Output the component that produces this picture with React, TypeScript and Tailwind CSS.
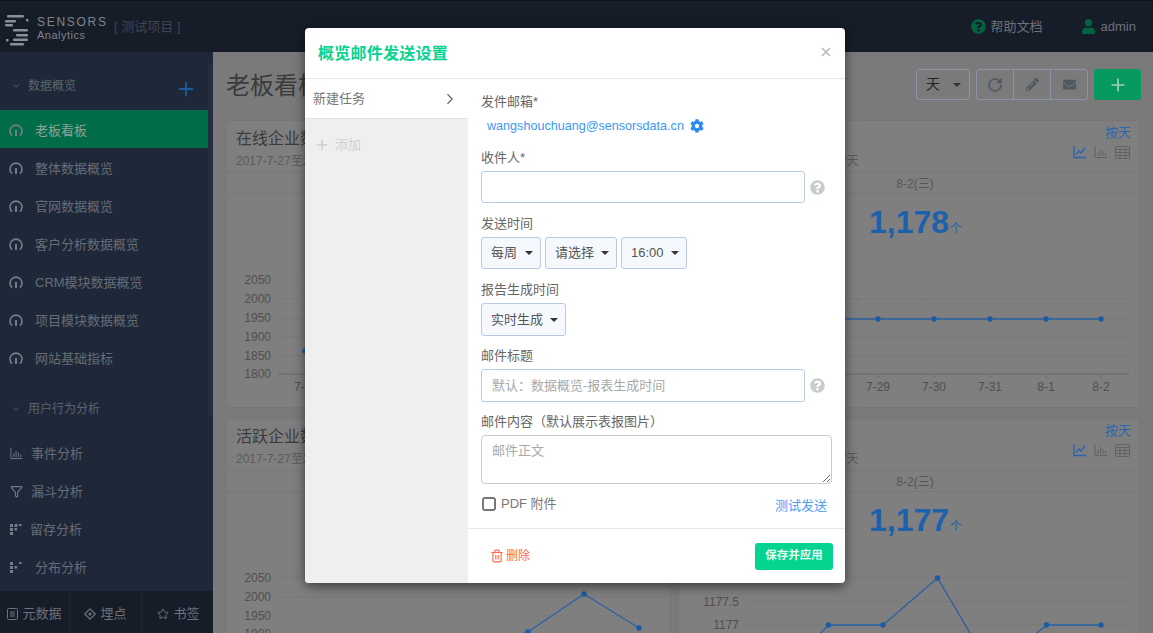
import React from "react";
import { FaCog, FaEnvelope, FaPencilAlt, FaQuestionCircle, FaUser } from "react-icons/fa";
import { ChevronDown, ChevronRight, Filter, Plus, RotateCw, Star, Trash2, X } from "lucide-react";

const Gauge = () => (
  <svg width="14" height="14" viewBox="0 0 14 14" fill="none" stroke="#757c87" strokeWidth="1.6" className="shrink-0 mt-[2px]">
    <path d="M3 12.6A6 6 0 1 1 11 12.6" />
    <path d="M7 7v6" strokeWidth="2" />
  </svg>
);

const Caret = () => (
  <svg width="8" height="4" viewBox="0 0 8 4" className="shrink-0" fill="#333">
    <path d="M0 0h8L4 4z" />
  </svg>
);

const Logo = () => (
  <svg width="30" height="44" viewBox="0 0 30 44" fill="#8b8f97" className="shrink-0">
    <rect x="7" y="11" width="17" height="2.4" rx="1" />
    <rect x="26" y="15" width="2.4" height="2.4" />
    <rect x="5" y="16" width="11" height="2.4" rx="1" />
    <rect x="5" y="20" width="8" height="2.4" rx="1" />
    <rect x="13" y="25" width="15" height="2.4" rx="1" />
    <rect x="16" y="30" width="12" height="2.4" rx="1" />
    <rect x="6" y="35" width="2.4" height="2.4" />
    <rect x="13" y="34.5" width="15" height="2.4" rx="1" />
    <rect x="10" y="39" width="14" height="2.4" rx="1" />
  </svg>
);

const BarIcon = ({ color = "#757c87", w = 14 }: { color?: string; w?: number }) => (
  <svg width={w} height={w} viewBox="0 0 14 14" fill="none" stroke={color} strokeWidth="1">
    <path d="M1 1v11.5h12.5" />
    <path d="M4 11V7M6.5 11V4M9 11V6M11.500 11V8" />
  </svg>
);

const LineIcon = () => (
  <svg width="14" height="14" viewBox="0 0 14 14" fill="none" stroke="#2b65ae" strokeWidth="1.400">
    <path d="M1 1v11.500h12.500" />
    <path d="M3 9.500 6 6l2 2 4-5" />
  </svg>
);

const TableIcon = () => (
  <svg width="15" height="13" viewBox="0 0 15 13" fill="none" stroke="#5f6266" strokeWidth="1">
    <rect x="0.500" y="0.500" width="14" height="12" rx="1" />
    <path d="M0.500 3.500h14M0.500 6.500h14M0.500 9.500h14M5 3.500v9M10 3.500v9" />
  </svg>
);

const GridDots = ({ sparse = false }: { sparse?: boolean }) => (
  <svg width="12" height="12" viewBox="0 0 12 12" fill="#757c87" className="shrink-0">
    <rect x="0" y="1" width="3" height="3" />
    <rect x="0" y="5" width="3" height="3" />
    <rect x="0" y="9" width="3" height="3" />
    <rect x="4.500" y="5" width="2.500" height="2.500" />
    <rect x="9" y="1" width="2.500" height="2" />
    {!sparse && <rect x="4.500" y="1" width="3" height="3" />}
  </svg>
);

type Pt = [number, number];

function Chart({
  gridX,
  gridEnd,
  ticks,
  axis,
  labels,
  points,
}: {
  gridX: number;
  gridEnd: number;
  ticks: { y: number; t: string }[];
  axis?: number;
  labels?: { x: number; t: string }[];
  points: Pt[];
}) {
  return (
    <svg width="100%" height="155" className="block" fontFamily="'Liberation Sans', sans-serif" fontSize="12">
      {ticks.map((k) => (
        <g key={k.t}>
          <line x1={gridX} x2={gridEnd} y1={k.y} y2={k.y} stroke="#727272" strokeDasharray="1 1" />
          <text x={gridX - 7} y={k.y + 4} textAnchor="end" fill="#4f4f4f">
            {k.t}
          </text>
        </g>
      ))}
      {axis !== undefined && <line x1={gridX} x2={gridEnd} y1={axis} y2={axis} stroke="#6a6a6a" />}
      {labels?.map((l) => (
        <g key={l.t}>
          <line x1={l.x} x2={l.x} y1={axis} y2={(axis ?? 0) + 4} stroke="#6a6a6a" />
          <text x={l.x} y={137} textAnchor="middle" fill="#4f4f4f">
            {l.t}
          </text>
        </g>
      ))}
      <polyline points={points.map((p) => p.join(",")).join(" ")} fill="none" stroke="#2a60a3" strokeWidth="1.300" />
      {points.map((p) => (
        <circle key={p[0]} cx={p[0]} cy={p[1]} r="2.700" fill="#1c5ba4" />
      ))}
    </svg>
  );
}

function Card({
  title,
  width,
  right,
  value,
  children,
}: {
  title: string;
  width: string;
  right?: boolean;
  value?: string;
  children: React.ReactNode;
}) {
  return (
    <div className={`${width} shrink-0 bg-[#7f7f7f] border border-[#777777] h-[288px]`}>
      <div className="h-[52px] border-b border-[#777777] flex justify-between pl-[9px] pr-[8px]">
        <div className="pt-[6px]">
          <div className="text-[16px] leading-6 text-[#3b3b3b]">{title}</div>
          <div className="text-[12px] leading-5 text-[#5b5b5b] whitespace-nowrap">2017-7-27至2017-8-2 | 过去 7天</div>
        </div>
        {right && (
          <div className="pt-[3px] flex flex-col items-end">
            <span className="text-[13px] leading-[18px] text-[#2b65ae]">按天</span>
            <div className="flex items-center gap-[7px] mt-[3px] pr-[1px]">
              <LineIcon />
              <BarIcon color="#5f6266" />
              <TableIcon />
            </div>
          </div>
        )}
      </div>
      <div className="h-[21px] border-b border-[#777777] pl-[12px] pt-[2px] flex items-center justify-center text-[12px] text-[#555555]">
        8-2(三)
      </div>
      <div className="h-[60px] pl-[13px] flex items-center justify-center">
        {value && (
          <div className="flex items-baseline pb-[4px] text-[#1e61ab]">
            <span className="text-[32px] leading-none font-bold">{value}</span>
            <span className="text-[12px] ml-[1px]">个</span>
          </div>
        )}
      </div>
      {children}
    </div>
  );
}

const inputCls =
  "h-full w-[324px] rounded-[3px] border border-[#b9c9e2] bg-white px-[10px] text-[13px] outline-none placeholder:text-[#a9a9a9]";

const Select = ({ label, w, h = "h-[32px]" }: { label: string; w: string; h?: string }) => (
  <div className={`${w} ${h} rounded-[3px] border border-[#b9c9e2] bg-[#f5f8fd] text-[13px] text-[#555555] flex items-center justify-between pl-[9px] pr-[7px]`}>
    <span>{label}</span>
    <Caret />
  </div>
);

const Label = ({ children, cls = "" }: { children: React.ReactNode; cls?: string }) => (
  <div className={`h-5 leading-[22px] text-[13px] text-[#666666] ${cls}`}>{children}</div>
);

const Help = () => <FaQuestionCircle size={15} color="#cbcbcb" className="ml-[5px]" />;

const topItems = ["老板看板", "整体数据概览", "官网数据概览", "客户分析数据概览", "CRM模块数据概览", "项目模块数据概览", "网站基础指标"];

export default function App() {
  const rightPts1: Pt[] = [765, 821, 877, 933, 989, 1045, 1100].map((x) => [x - 678, 65]);
  const rightPts2: Pt[] = [
    [95, 129],
    [149.500, 73],
    [204, 73],
    [258.500, 26],
    [313, 118],
    [367.500, 73],
    [422, 73],
  ];
  const ticks = [
    { y: 26, t: "2050" },
    { y: 45, t: "2000" },
    { y: 64, t: "1950" },
    { y: 83, t: "1900" },
    { y: 102, t: "1850" },
    { y: 120, t: "1800" },
  ];
  return (
    <div className="relative w-[1153px] h-[633px] overflow-hidden flex flex-col bg-[#7a7a7a] font-['Liberation_Sans','Noto_Sans_CJK_SC',sans-serif]">
      <header className="h-[52px] shrink-0 bg-[#171c29] border-t border-[#0f1322] flex items-center">
        <div className="-mt-[1px]">
          <Logo />
        </div>
        <div className="ml-[7px] w-[70px] pt-[3px] flex flex-col text-[#7f848c] whitespace-nowrap">
          <span className="text-[12px] leading-[14px] tracking-[1.700px]">SENSORS</span>
          <span className="text-[11px] leading-[13px] tracking-[0.500px]">Analytics</span>
        </div>
        <span className="ml-[7px] text-[13px] text-[#3e4450]">[ 测试项目 ]</span>
        <div className="ml-auto flex items-center text-[#6c717a] text-[13px] pr-[17px]">
          <FaQuestionCircle size={15} color="#03623f" />
          <span className="ml-[5px]">帮助文档</span>
          <FaUser size={15} color="#03623f" className="ml-[38px]" />
          <span className="ml-[5px]">admin</span>
        </div>
      </header>

      <div className="flex flex-1 min-h-0">
        <aside className="relative w-[213px] shrink-0 bg-[#1f2838] flex flex-col">
          <div className="absolute left-[208px] top-[11px] w-[5px] h-[353px] bg-[#232d3e]" />
          <div className="h-[58px] pt-[10px] pl-[11px] flex items-center text-[12px] text-[#5c6470]">
            <ChevronDown size={10} color="#5c6470" />
            <span className="ml-[7px]">数据概览</span>
            <Plus size={22} color="#1c5a9a" className="ml-[99px] mt-[5px]" />
          </div>
          {topItems.map((t, i) => (
            <div
              key={t}
              className={`w-[208px] h-[38px] shrink-0 pl-[9px] flex items-center text-[13px] ${
                i === 0 ? "bg-[#016d48] text-[#8fa198]" : "text-[#666d77]"
              }`}
            >
              <Gauge />
              <span className="ml-[12px] pt-[4px]">{t}</span>
            </div>
          ))}
          <div className="h-[58px] shrink-0 pt-[8px] pl-[11px] flex items-center text-[12px] text-[#5c6470]">
            <ChevronDown size={10} color="#5c6470" />
            <span className="ml-[7px]">用户行为分析</span>
          </div>
          {[
            { t: "事件分析", i: <BarIcon w={13} /> },
            { t: "漏斗分析", i: <Filter size={13} color="#757c87" /> },
            { t: "留存分析", i: <GridDots /> },
            { t: "分布分析", i: <GridDots sparse /> },
          ].map((r, idx) => (
            <div key={r.t} className="h-[38px] shrink-0 pl-[10px] flex items-center text-[13px] text-[#666d77]">
              {r.i}
              <span className={`pt-[1px] ${idx === 3 ? "ml-[13px]" : "ml-[8px]"}`}>{r.t}</span>
            </div>
          ))}
          <div className="mt-auto h-[42px] bg-[#171c29] flex items-center text-[13px] text-[#6d7279]">
            <div className="w-[70px] h-full pt-[3px] flex items-center justify-center gap-[4px] border-r border-[#1f2533]">
              <svg width="11" height="12" viewBox="0 0 11 12" fill="none" stroke="#6d7279">
                <rect x="0.500" y="0.500" width="10" height="11" rx="1" />
                <path d="M3 4h5M3 6h5M3 8h5" />
              </svg>
              元数据
            </div>
            <div className="w-[72px] h-full pt-[3px] flex items-center justify-center gap-[4px] border-r border-[#1f2533]">
              <svg width="12" height="12" viewBox="0 0 12 12" fill="none" stroke="#6d7279" strokeWidth="1.200">
                <path d="M6 .8 11.200 6 6 11.200 .8 6z" strokeLinejoin="round" />
                <circle cx="6" cy="6" r="1" fill="#6d7279" />
              </svg>
              埋点
            </div>
            <div className="flex-1 h-full pt-[3px] pl-[2px] flex items-center justify-center gap-[4px]">
              <Star size={12} color="#6d7279" />
              书签
            </div>
          </div>
        </aside>

        <main className="flex-1 min-w-0 pl-[13px] overflow-hidden">
          <div className="h-[31px] mt-[17px] flex items-center justify-between pr-[12px]">
            <h1 className="text-[24px] pt-[2px] text-[#3a3a3a] whitespace-nowrap">老板看板</h1>
            <div className="flex items-center h-full">
              <div className="w-[54px] h-full rounded-[3px] border border-[#8a95a6] flex items-center justify-between pl-[9px] pr-[8px] text-[14px] text-[#222222]">
                天
                <Caret />
              </div>
              <div className="ml-[6px] h-full w-[112px] rounded-[3px] border border-[#8a95a6] flex">
                <div className="flex-1 flex items-center justify-center border-r border-[#8a95a6]">
                  <RotateCw size={16} color="#4f5862" strokeWidth={2.500} />
                </div>
                <div className="flex-1 flex items-center justify-center border-r border-[#8a95a6]">
                  <FaPencilAlt size={13} color="#4f5862" />
                </div>
                <div className="flex-1 flex items-center justify-center">
                  <FaEnvelope size={13} color="#4f5862" />
                </div>
              </div>
              <div className="ml-[6px] w-[47px] h-full rounded-[3px] bg-[#079a60] flex items-center justify-center">
                <Plus size={20} color="#9fd0bb" />
              </div>
            </div>
          </div>
          <div className="mt-[20px] flex flex-col gap-[10px]">
            <div className="flex gap-[8px]">
              <Card title="在线企业数" width="w-[444px]">
                <Chart
                  gridX={51}
                  gridEnd={440}
                  axis={120}
                  ticks={ticks}
                  labels={[{ x: 79, t: "7-27" }]}
                  points={[
                    [78, 97],
                    [134, 97],
                    [190, 97],
                  ]}
                />
              </Card>
              <Card title="活跃用户数" width="w-[462px]" right value="1,178">
                <Chart
                  gridX={67}
                  gridEnd={450}
                  axis={120}
                  ticks={ticks}
                  labels={[
                    { x: 199, t: "7-29" },
                    { x: 255, t: "7-30" },
                    { x: 311, t: "7-31" },
                    { x: 367, t: "8-1" },
                    { x: 422, t: "8-2" },
                  ]}
                  points={rightPts1}
                />
              </Card>
            </div>
            <div className="flex gap-[8px]">
              <Card title="活跃企业数" width="w-[444px]">
                <Chart
                  gridX={51}
                  gridEnd={440}
                  ticks={[
                    { y: 26, t: "2050" },
                    { y: 45, t: "2000" },
                    { y: 64, t: "1950" },
                    { y: 82, t: "1900" },
                  ]}
                  points={[
                    [245, 100],
                    [301, 80],
                    [357, 42],
                    [412, 76],
                  ]}
                />
              </Card>
              <Card title="活跃用户数" width="w-[462px]" right value="1,177">
                <Chart
                  gridX={67}
                  gridEnd={450}
                  ticks={[
                    { y: 26, t: "1178" },
                    { y: 50, t: "1177.5" },
                    { y: 73, t: "1177" },
                  ]}
                  points={rightPts2}
                />
              </Card>
            </div>
          </div>
        </main>
      </div>

      <div className="absolute left-[305px] top-[28px] w-[540px] h-[555px] rounded-[4px] bg-white shadow-[0_3px_12px_rgba(0,0,0,0.55)] flex flex-col overflow-hidden">
        <div className="h-[51px] shrink-0 border-b border-[#e6e6e6] flex items-center justify-between pl-[13px] pr-[12px]">
          <span className="text-[16px] pt-[1px] tracking-[0.250px] font-bold text-[#05d391]">概览邮件发送设置</span>
          <X size={14} color="#bdbdbd" strokeWidth={3} className="-mt-[3px]" />
        </div>
        <div className="flex flex-1 min-h-0">
          <div className="w-[163px] shrink-0 bg-[#efefef]">
            <div className="h-[40px] bg-white border-b border-[#e4e4e4] flex items-center justify-between pl-[8px] pr-[9px] text-[13px] text-[#777777]">
              <span className="pt-[1px]">新建任务</span>
              <ChevronRight size={18} color="#666666" strokeWidth={1.500} />
            </div>
            <div className="mt-[16px] pl-[9px] flex items-center text-[13px] text-[#cfcfcf]">
              <Plus size={16} color="#cfcfcf" strokeWidth={2.500} />
              <span className="ml-[5px]">添加</span>
            </div>
          </div>
          <div className="flex-1 min-w-0 flex flex-col">
            <div className="flex-1 pl-[13px] pr-[13px] pt-[12px]">
              <Label>发件邮箱*</Label>
              <div className="mt-[5px] h-5 pl-[6px] flex items-center text-[12.6px] text-[#3d97f5]">
                wangshouchuang@sensorsdata.cn
                <FaCog size={14} color="#2a8af2" className="ml-[6px]" />
              </div>
              <Label cls="mt-[11px]">收件人*</Label>
              <div className="mt-[4px] h-[32px] flex items-center">
                <input className={inputCls} />
                <Help />
              </div>
              <Label cls="mt-[10px]">发送时间</Label>
              <div className="mt-[4px] flex gap-[4px]">
                <Select label="每周" w="w-[60px]" />
                <Select label="请选择" w="w-[72px]" />
                <Select label="16:00" w="w-[66px]" />
              </div>
              <Label cls="mt-[10px]">报告生成时间</Label>
              <div className="mt-[4px]">
                <Select label="实时生成" w="w-[85px]" h="h-[33px]" />
              </div>
              <Label cls="mt-[9px]">邮件标题</Label>
              <div className="mt-[4px] h-[33px] flex items-center">
                <input className={inputCls} placeholder="默认：数据概览-报表生成时间" />
                <Help />
              </div>
              <Label cls="mt-[9px]">邮件内容（默认展示表报图片）</Label>
              <textarea
                className="block mt-[4px] h-[49px] w-[351px] rounded-[4px] border border-[#cccccc] px-[10px] py-[5px] text-[13px] leading-5 outline-none placeholder:text-[#a9a9a9]"
                placeholder="邮件正文"
              />
              <div className="mt-[10px] h-5 flex items-center justify-between pr-[5px]">
                <div className="flex items-center text-[13px] text-[#777777]">
                  <span className="ml-[1px] w-[14px] h-[14px] rounded-[3px] border-2 border-[#777777]" />
                  <span className="ml-[5px]">PDF 附件</span>
                </div>
                <span className="text-[13px] text-[#4a9df8] pt-[4px]">测试发送</span>
              </div>
            </div>
            <div className="h-[55px] shrink-0 border-t border-[#e6e6e6] pl-[22px] pr-[12px] flex items-center justify-between">
              <div className="flex items-center text-[12px] text-[#ff6a50]">
                <Trash2 size={14} color="#ff6a50" />
                <span className="ml-[2px]">删除</span>
              </div>
              <div className="w-[78px] h-[27px] rounded-[3px] bg-[#04d48f] flex items-center justify-center text-[11.5px] font-semibold text-[#e6fbf3]">
                保存并应用
              </div>
            </div>
          </div>
        </div>
      </div>
    </div>
  );
}
